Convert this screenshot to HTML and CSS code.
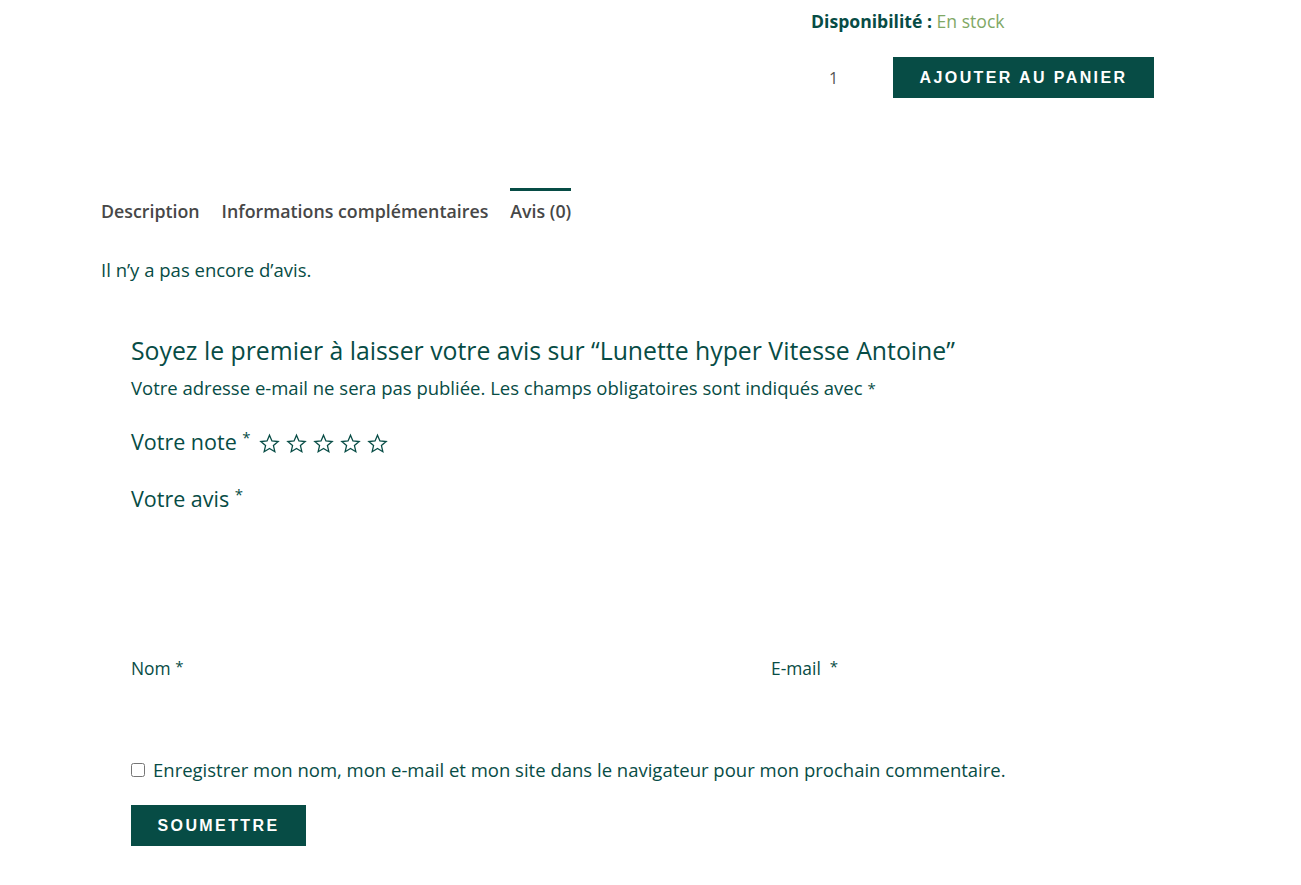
FILE: index.html
```html
<!DOCTYPE html>
<html lang="fr">
<head>
<meta charset="utf-8">
<link rel="stylesheet" href="styles.css">
</head>
<body>
<div class="page">
  <div class="summary">
    <p class="stock"><strong>Disponibilité :</strong> <span class="instock">En stock</span></p>
    <form class="cart">
      <div class="qty">1</div>
      <button type="button" class="btn btn-cart">AJOUTER AU PANIER</button>
    </form>
  </div>

  <div class="tabs">
    <ul class="tab-list">
      <li class="tab">Description</li>
      <li class="tab">Informations complémentaires</li>
      <li class="tab active">Avis (0)</li>
    </ul>
    <p class="noreviews">Il n’y a pas encore d’avis.</p>

    <div class="review-form">
      <h3 class="reply-title">Soyez le premier à laisser votre avis sur “Lunette hyper Vitesse Antoine”</h3>
      <p class="notes">Votre adresse e-mail ne sera pas publiée. Les champs obligatoires sont indiqués avec <span class="req">*</span></p>
      <div class="rating">
        <span class="big-label">Votre note <span class="req">*</span></span>
        <span class="stars">
          <svg class="star" viewBox="0 0 24 24"><path d="M12 2.5l2.8 6.6 7.1.6-5.4 4.7 1.6 7-6.1-3.7-6.1 3.7 1.6-7-5.4-4.7 7.1-.6z"/></svg>
          <svg class="star" viewBox="0 0 24 24"><path d="M12 2.5l2.8 6.6 7.1.6-5.4 4.7 1.6 7-6.1-3.7-6.1 3.7 1.6-7-5.4-4.7 7.1-.6z"/></svg>
          <svg class="star" viewBox="0 0 24 24"><path d="M12 2.5l2.8 6.6 7.1.6-5.4 4.7 1.6 7-6.1-3.7-6.1 3.7 1.6-7-5.4-4.7 7.1-.6z"/></svg>
          <svg class="star" viewBox="0 0 24 24"><path d="M12 2.5l2.8 6.6 7.1.6-5.4 4.7 1.6 7-6.1-3.7-6.1 3.7 1.6-7-5.4-4.7 7.1-.6z"/></svg>
          <svg class="star" viewBox="0 0 24 24"><path d="M12 2.5l2.8 6.6 7.1.6-5.4 4.7 1.6 7-6.1-3.7-6.1 3.7 1.6-7-5.4-4.7 7.1-.6z"/></svg>
        </span>
      </div>
      <div class="comment">
        <span class="big-label">Votre avis <span class="req">*</span></span>
      </div>
      <div class="fields">
        <div class="field"><span class="small-label">Nom <span class="req">*</span></span></div>
        <div class="field"><span class="small-label">E-mail&nbsp; <span class="req">*</span></span></div>
      </div>
      <label class="cookies"><input type="checkbox" class="check"> Enregistrer mon nom, mon e-mail et mon site dans le navigateur pour mon prochain commentaire.</label>
      <button type="button" class="btn btn-submit">SOUMETTRE</button>
    </div>
  </div>
</div>
</body>
</html>
```

FILE: styles.css
```css
* { box-sizing: border-box; }
html, body { margin: 0; padding: 0; background: #fff; }
body {
  font-family: "Open Sans", "Noto Sans", sans-serif;
  color: #074c45;
  font-size: 18.5px;
}
.page { width: 1301px; }
p { margin: 0; }

.summary {
  padding-left: 811px;
  padding-top: 9px;
}
.stock { font-size: 17.6px; line-height: 24px; }
.stock strong { font-weight: 700; }
.instock { color: #7fa865; }
.cart {
  display: flex;
  align-items: center;
  margin: 24px 0 0;
}
.qty {
  width: 82px;
  padding-left: 18px;
  font-size: 16px;
  color: #555;
}
.btn {
  background: #074c45;
  color: #fff;
  border: 0;
  font-family: "Liberation Sans", sans-serif;
  font-weight: 700;
  letter-spacing: 2.4px;
  font-size: 16px;
  height: 41px;
  padding: 0;
  cursor: pointer;
}
.btn-cart { width: 261px; }

.tabs { padding: 0 0 0 101px; margin-top: 90px; }
.tab-list {
  list-style: none;
  margin: 0;
  padding: 0;
  display: flex;
  gap: 22px;
}
.tab {
  font-weight: 600;
  font-size: 17.8px;
  color: #474747;
  padding-top: 8px;
  border-top: 3px solid transparent;
  line-height: 24px;
}
.tab.active { border-top-color: #074c45; }
.noreviews { margin-top: 35px; line-height: 24px; }

.review-form { padding-left: 30px; margin-top: 52px; }
.reply-title {
  margin: 0;
  font-weight: 400;
  font-size: 24.8px;
  line-height: 32px;
}
.notes { margin-top: 10px; line-height: 24px; }
.rating { display: flex; align-items: center; margin-top: 25px; height: 32px; }
.big-label { font-size: 21.5px; }
.req { font-size: 15px; vertical-align: top; }
.stars { display: inline-flex; gap: 6px; margin-left: 8px; margin-top: 4px; }
.star {
  width: 21px; height: 21px;
  fill: none;
  stroke: #074c45;
  stroke-width: 1.5;
}
.comment { margin-top: 27px; height: 32px; }

.fields { display: grid; grid-template-columns: 640px auto; margin-top: 140px; }
.field { font-size: 17.4px; }
.cookies { display: flex; align-items: center; margin-top: 77px; }
.check { margin: 0 8px 0 0; width: 14px; height: 14px; }
.btn-submit { margin-top: 23px; width: 175px; }
```
